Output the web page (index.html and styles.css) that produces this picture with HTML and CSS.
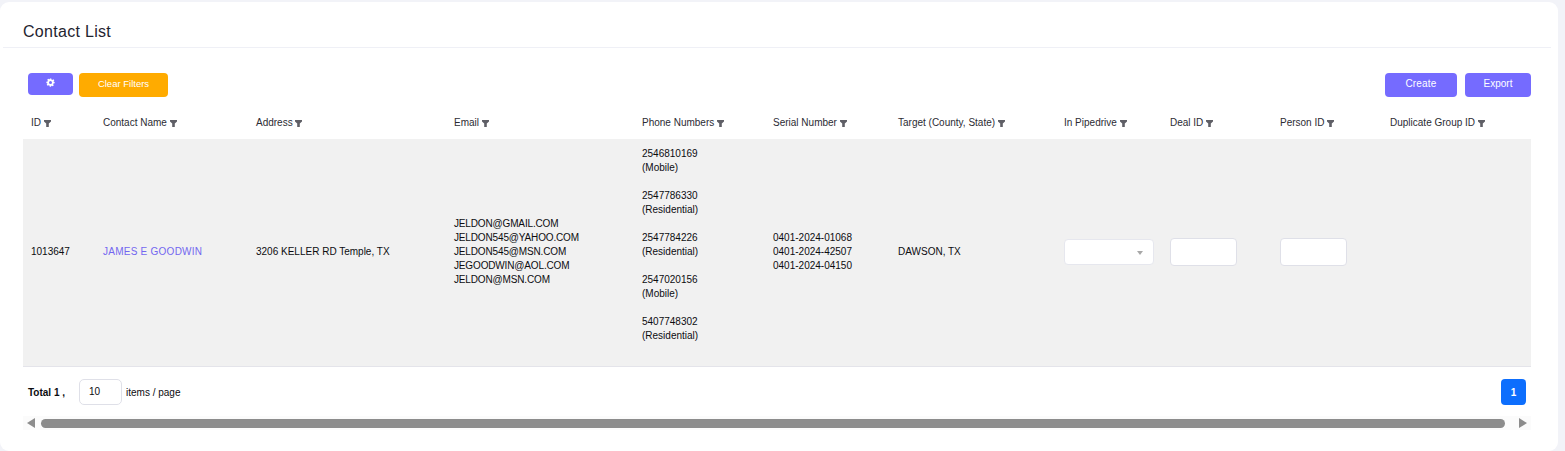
FILE: index.html
```html
<!DOCTYPE html>
<html lang="en">
<head>
<meta charset="utf-8">
<title>Contact List</title>
<link rel="stylesheet" href="styles.css">
</head>
<body>
<svg class="sprite" width="0" height="0" aria-hidden="true">
  <symbol id="funnel" viewBox="0 0 7 7"><path d="M0 0h7v1.500L4.800 3.500V7H2.200V3.500L0 1.500z"/></symbol>
</svg>
<main class="card">
  <header class="card-head"><h1>Contact List</h1></header>
  <section class="card-body">
    <div class="toolbar">
      <div class="group">
        <button class="btn btn-gear" aria-label="Settings">
          <svg width="9" height="9" viewBox="0 0 24 24"><path fill="#fff" fill-rule="evenodd" d="M10 1h4l.7 3.200 1.900.8 2.800-1.800 2.800 2.800-1.800 2.800.8 1.900L23 10v4l-3.200.7-.8 1.900 1.800 2.800-2.800 2.800-2.800-1.800-1.900.8L14 23h-4l-.7-3.200-1.900-.8-2.800 1.800-2.800-2.800 1.800-2.800-.8-1.900L1 14v-4l3.200-.7.8-1.900-1.800-2.800 2.800-2.800 2.800 1.800 1.900-.8zM12 8a4 4 0 1 0 0 8 4 4 0 0 0 0-8z"/></svg>
        </button>
        <button class="btn btn-clear">Clear Filters</button>
      </div>
      <div class="group group-right">
        <button class="btn btn-create">Create</button>
        <button class="btn btn-export">Export</button>
      </div>
    </div>
    <table class="grid">
      <colgroup>
        <col class="c-id"><col class="c-name"><col class="c-addr"><col class="c-email"><col class="c-phone"><col class="c-serial"><col class="c-target"><col class="c-pipe"><col class="c-deal"><col class="c-person"><col class="c-dup">
      </colgroup>
      <thead>
        <tr>
          <th>ID <svg class="funnel"><use href="#funnel"/></svg></th>
          <th>Contact Name <svg class="funnel"><use href="#funnel"/></svg></th>
          <th>Address <svg class="funnel"><use href="#funnel"/></svg></th>
          <th>Email <svg class="funnel"><use href="#funnel"/></svg></th>
          <th>Phone Numbers <svg class="funnel"><use href="#funnel"/></svg></th>
          <th>Serial Number <svg class="funnel"><use href="#funnel"/></svg></th>
          <th>Target (County, State) <svg class="funnel"><use href="#funnel"/></svg></th>
          <th>In Pipedrive <svg class="funnel"><use href="#funnel"/></svg></th>
          <th>Deal ID <svg class="funnel"><use href="#funnel"/></svg></th>
          <th>Person ID <svg class="funnel"><use href="#funnel"/></svg></th>
          <th>Duplicate Group ID <svg class="funnel"><use href="#funnel"/></svg></th>
        </tr>
      </thead>
      <tbody>
        <tr>
          <td>1013647</td>
          <td><a class="contact" href="#">JAMES E GOODWIN</a></td>
          <td>3206 KELLER RD Temple, TX</td>
          <td class="emails">JELDON@GMAIL.COM<br>JELDON545@YAHOO.COM<br>JELDON545@MSN.COM<br>JEGOODWIN@AOL.COM<br>JELDON@MSN.COM</td>
          <td>2546810169<br>(Mobile)<br><br>2547786330<br>(Residential)<br><br>2547784226<br>(Residential)<br><br>2547020156<br>(Mobile)<br><br>5407748302<br>(Residential)<br><br></td>
          <td>0401-2024-01068<br>0401-2024-42507<br>0401-2024-04150</td>
          <td>DAWSON, TX</td>
          <td><div class="select"><span class="caret"></span></div></td>
          <td><input class="field" type="text" aria-label="Deal ID"></td>
          <td><input class="field" type="text" aria-label="Person ID"></td>
          <td></td>
        </tr>
      </tbody>
    </table>
    <div class="pager">
      <div class="pager-left">
        <strong class="total">Total 1 ,</strong>
        <input class="size" type="text" value="10" aria-label="Items per page">
        <span>items / page</span>
      </div>
      <button class="page">1</button>
    </div>
    <div class="scrollbar">
      <span class="arrow arrow-left"></span>
      <span class="thumb"></span>
      <span class="arrow arrow-right"></span>
    </div>
  </section>
</main>
</body>
</html>
```
FILE: styles.css
```css
* { box-sizing: border-box; }
html, body { height: 100%; }
body {
  margin: 0;
  padding: 2px 7px 0 0;
  background: #f2f3f8;
  font-family: "Liberation Sans", Arial, sans-serif;
  font-size: 10px;
  color: #1d1d24;
  overflow: hidden;
}
.sprite { position: absolute; }
.card {
  background: #fff;
  border-radius: 9px;
  height: 449px;
  padding: 0 0 0 3px;
}
.card-head {
  height: 46px;
  margin-right: 7px;
  padding: 20px 0 0 20px;
  border-bottom: 1px solid #eff0f6;
}
h1 {
  margin: 0;
  font-size: 16px;
  line-height: 19px;
  font-weight: 400;
  letter-spacing: .3px;
  color: #1f2430;
}
.card-body { padding: 25px 27px 0 20px; }
.toolbar {
  display: flex;
  justify-content: space-between;
  align-items: flex-start;
  padding: 0 0 0 5px;
}
.group { display: flex; gap: 6px; align-items: flex-start; }
.group-right { gap: 8px; }
.btn {
  border: 0;
  border-radius: 4px;
  height: 24px;
  padding: 0 0 2px;
  color: #fff;
  font: inherit;
  line-height: 12px;
  display: flex;
  align-items: center;
  justify-content: center;
  background: #756bff;
}
.btn-gear { width: 45px; height: 22px; padding-bottom: 3px; }
.btn-clear { width: 89px; background: #ffab00; font-size: 9.500px; }
.btn-create { width: 72px; letter-spacing: .2px; }
.btn-export { width: 66px; }
.grid {
  border-collapse: collapse;
  table-layout: fixed;
  width: 1508px;
  margin-top: 11px;
}
.c-id { width: 72px; }
.c-name { width: 153px; }
.c-addr { width: 198px; }
.c-email { width: 188px; }
.c-phone { width: 131px; }
.c-serial { width: 125px; }
.c-target { width: 166px; }
.c-pipe { width: 106px; }
.c-deal { width: 110px; }
.c-person { width: 110px; }
.c-dup { width: 149px; }
th {
  height: 31px;
  padding: 0 8px 2px;
  text-align: left;
  font-weight: 400;
  color: #2b2b33;
  white-space: nowrap;
}
.funnel {
  width: 7px;
  height: 7px;
  vertical-align: -1px;
  fill: #5f5f66;
}
td {
  background: #f1f1f1;
  padding: 8px 8px 9px;
  line-height: 14px;
  border-bottom: 1px solid #e4e4ea;
  vertical-align: middle;
  color: #0c0c10;
  white-space: nowrap;
}
.emails { letter-spacing: -.15px; }
.contact { color: #7367f0; text-decoration: none; letter-spacing: .25px; }
.select {
  width: 90px;
  height: 26px;
  background: #fff;
  border: 1px solid #e6e7ee;
  border-radius: 4px;
  position: relative;
}
.caret {
  position: absolute;
  right: 10px;
  top: 11px;
  border: 3px solid transparent;
  border-top: 4px solid #a8a8a8;
  border-bottom: 0;
}
.field {
  display: block;
  width: 67px;
  height: 28px;
  background: #fff;
  border: 1px solid #dfe0e8;
  border-radius: 4px;
  padding: 0 6px;
  outline: 0;
}
.pager {
  display: flex;
  justify-content: space-between;
  align-items: center;
  height: 26px;
  margin-top: 12px;
  padding: 0 5px;
}
.pager-left { display: flex; align-items: center; color: #0c0c10; }
.total { width: 51px; }
.size {
  width: 43px;
  height: 26px;
  margin-right: 4px;
  border: 1px solid #dfe0e8;
  border-radius: 5px;
  padding: 0 0 2px 9px;
  font: inherit;
  color: #0c0c10;
  outline: 0;
}
.page {
  width: 25px;
  height: 26px;
  border: 0;
  border-radius: 4px;
  background: #0d6efd;
  color: #fff;
  font: inherit;
  font-weight: 700;
  padding: 0;
}
.scrollbar {
  display: flex;
  align-items: center;
  height: 14px;
  margin-top: 11px;
  width: 1508px;
  background: #fbfbfb;
  padding: 0 4px;
  gap: 6px;
}
.arrow { width: 0; height: 0; border: 5px solid transparent; }
.arrow-left { border-right: 8px solid #8c8c8c; border-left: 0; }
.arrow-right { border-left: 8px solid #8c8c8c; border-right: 0; margin-left: 8px; }
.thumb { flex: 1; height: 9px; border-radius: 5px; background: #8c8c8c; }
```
